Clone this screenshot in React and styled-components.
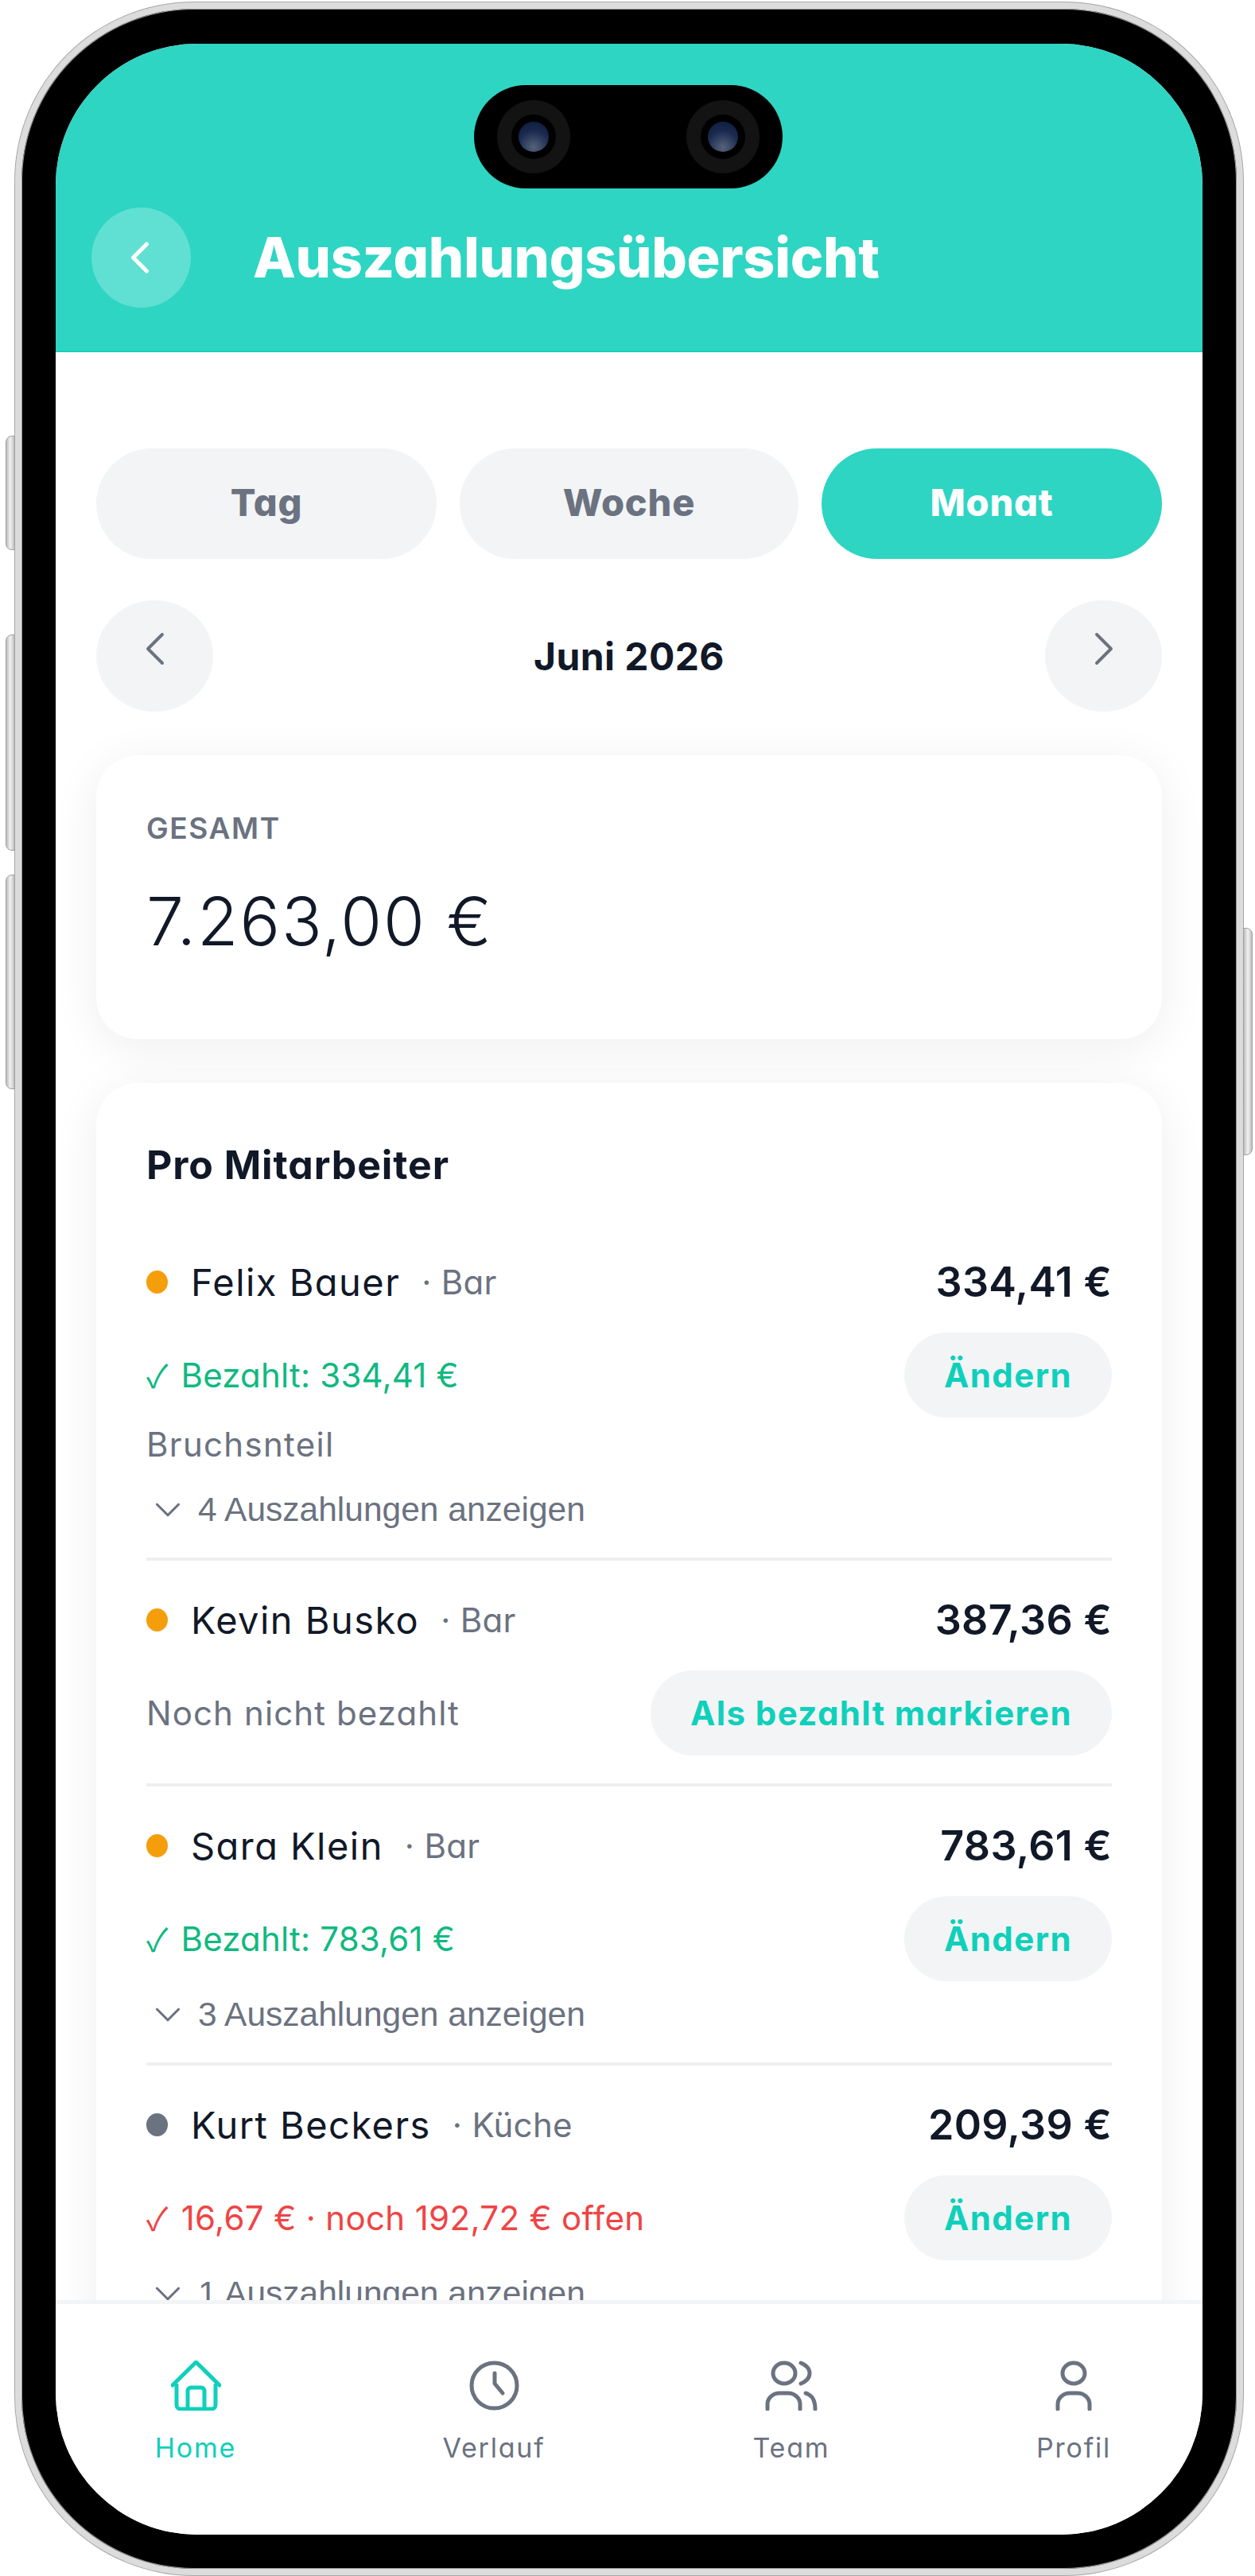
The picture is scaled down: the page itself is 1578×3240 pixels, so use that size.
import React from "react";
import styled, { createGlobalStyle } from "styled-components";
import { ChevronLeft, ChevronRight, ChevronDown } from "lucide-react";

const GlobalStyle = createGlobalStyle`
  html, body {
    margin: 0;
    padding: 0;
    background: #fff;
  }
  body {
    font-family: Inter, "Noto Sans", "Liberation Sans", sans-serif;
    font-feature-settings: "cv11";
  }
  * {
    box-sizing: border-box;
  }
`;

const Page = styled.div`
  width: 1578px;
  height: 3240px;
  padding: 3px 0 0 19px;
  overflow: hidden;
`;

const Frame = styled.div`
  position: relative;
  width: 1544px;
  height: 3236px;
  padding: 44px 43px 43px;
  background: #000;
  border: 8px solid #dcdcdc;
  border-radius: 225px;
  box-shadow: 0 0 0 1px #a8a8a8, inset 0 0 0 1px #9a9a9a;
`;

const SideKey = styled.div`
  position: absolute;
  top: ${(p) => p.$top}px;
  ${(p) => (p.$right ? "right: -20px;" : "left: -20px;")}
  width: 12px;
  height: ${(p) => p.$height}px;
  background: linear-gradient(90deg, #bdbdbd, #f2f2f2 50%, #bdbdbd);
  border: 1px solid #9f9f9f;
  border-radius: ${(p) => (p.$right ? "0 8px 8px 0" : "8px 0 0 8px")};
`;

const Screen = styled.div`
  position: relative;
  display: flex;
  flex-direction: column;
  height: 100%;
  background: #fff;
  border-radius: 178px;
  overflow: hidden;
`;

const Notch = styled.div`
  position: absolute;
  top: 52px;
  left: 526px;
  display: flex;
  align-items: center;
  justify-content: space-between;
  width: 388px;
  height: 130px;
  padding: 0 29px;
  background: #000;
  border-radius: 65px;
`;

const Camera = styled.div`
  display: flex;
  align-items: center;
  justify-content: center;
  width: 92px;
  height: 92px;
  background: #131313;
  border-radius: 50%;
`;

const CameraCore = styled.div`
  display: flex;
  align-items: center;
  justify-content: center;
  width: 56px;
  height: 56px;
  background: #000;
  border-radius: 50%;
`;

const Lens = styled.div`
  width: 38px;
  height: 38px;
  background: radial-gradient(circle at 50% 85%, #57627a, #1a2a50 55%, #0d1a3a);
  border-radius: 50%;
`;

const Header = styled.header`
  display: flex;
  flex-shrink: 0;
  align-items: center;
  gap: 78px;
  height: 388px;
  padding: 152px 0 0 45px;
  background: #2ed5c2;
  border-bottom: 2px solid #18d0bb;
`;

const BackButton = styled.div`
  display: flex;
  align-items: center;
  justify-content: center;
  width: 125px;
  height: 126px;
  padding-right: 4px;
  color: #fff;
  background: #60e0d2;
  border-radius: 50%;
`;

const Title = styled.h1`
  margin: 0;
  color: #fff;
  font-size: 70px;
  font-weight: 800;
  line-height: 80px;
  letter-spacing: -0.3px;
  white-space: nowrap;
`;

const Main = styled.main`
  flex: 1;
  min-height: 0;
  padding: 121px 51px 0;
  overflow: hidden;
`;

const Tabs = styled.div`
  display: grid;
  grid-template-columns: 428px 426px 428px;
  column-gap: 29px;
`;

const Tab = styled.div`
  display: flex;
  align-items: center;
  justify-content: center;
  height: 139px;
  padding-bottom: 4px;
  color: ${(p) => (p.$active ? "#fff" : "#6b7280")};
  background: ${(p) => (p.$active ? "#2ed5c2" : "#f3f4f6")};
  border-radius: 70px;
  font-size: 47px;
  font-weight: 800;
  letter-spacing: 0.8px;
`;

const DateRow = styled.div`
  display: flex;
  align-items: center;
  justify-content: space-between;
  margin-top: 52px;
`;

const DateButton = styled.div`
  display: flex;
  align-items: center;
  justify-content: center;
  width: 147px;
  height: 140px;
  padding-bottom: 18px;
  color: #6b7280;
  background: #f3f4f6;
  border-radius: 50%;
`;

const DateLabel = styled.div`
  color: #111827;
  font-size: 48px;
  font-weight: 700;
  letter-spacing: 0.4px;
`;

const Card = styled.section`
  margin-top: 55px;
  padding: ${(p) => p.$padding};
  height: ${(p) => p.$height || "auto"};
  background: #fff;
  border-radius: 52px;
  box-shadow: 0 10px 60px rgba(0, 0, 0, 0.07);
`;

const TotalLabel = styled.div`
  color: #6b7280;
  font-size: 37px;
  font-weight: 600;
  line-height: 44px;
  letter-spacing: 1.6px;
`;

const TotalValue = styled.div`
  margin-top: 45px;
  color: #111827;
  font-size: 84px;
  font-weight: 350;
  line-height: 100px;
  letter-spacing: 1.9px;
`;

const CardTitle = styled.h2`
  margin: 0;
  color: #111827;
  font-size: 50px;
  font-weight: 700;
  line-height: 60px;
  letter-spacing: 0.9px;
`;

const List = styled.div`
  margin-top: 43px;
`;

const Row = styled.div`
  padding: 44px 0 35px;
  border-bottom: ${(p) => (p.$last ? "none" : "4px solid #eeeff1")};
`;

const RowHead = styled.div`
  display: flex;
  align-items: center;
  height: 60px;
`;

const Dot = styled.span`
  flex-shrink: 0;
  width: 27px;
  height: 29px;
  background: ${(p) => p.$color};
  border-radius: 50%;
`;

const Name = styled.span`
  margin-left: 29px;
  color: #111827;
  font-size: 47px;
  font-weight: 400;
  letter-spacing: 1.45px;
`;

const Dept = styled.span`
  margin-left: 27px;
  color: #6b7280;
  font-size: 42px;
  font-weight: 400;
  letter-spacing: 0.3px;
`;

const Amount = styled.span`
  margin-left: auto;
  color: #111827;
  font-size: 52px;
  font-weight: 600;
  letter-spacing: 0.3px;
`;

const PayRow = styled.div`
  display: flex;
  align-items: center;
  justify-content: space-between;
  margin-top: 34px;
`;

const PayText = styled.span`
  color: ${(p) => p.$color};
  font-size: 42px;
  font-weight: 400;
  line-height: 50px;
  letter-spacing: ${(p) => p.$spacing}px;
`;

const CheckMark = styled.span`
  margin-right: 16px;
  font-family: "Noto Sans CJK JP", "DejaVu Sans", sans-serif;
  font-size: 40px;
  line-height: 1;
`;

const ActionButton = styled.div`
  display: flex;
  align-items: center;
  justify-content: center;
  height: 107px;
  padding: 0 50px;
  color: #0fd0bb;
  background: #f3f4f6;
  border-radius: 54px;
  font-size: 42px;
  font-weight: 700;
  letter-spacing: 1.4px;
`;

const Note = styled.div`
  margin-top: 9px;
  color: #6b7280;
  font-size: 42px;
  line-height: 50px;
  letter-spacing: 1.3px;
`;

const Toggle = styled.div`
  display: flex;
  align-items: center;
  gap: 11px;
  height: 50px;
  margin-top: ${(p) => p.$top}px;
  color: #6b7280;
  font-family: "Liberation Sans", Arial, sans-serif;
  font-size: 42.5px;
  line-height: 50px;
  font-feature-settings: normal;
`;

const BottomNav = styled.nav`
  display: grid;
  flex-shrink: 0;
  grid-template-columns: 375px 374px 355px 140px;
  height: 295px;
  padding: 71px 0 0 106px;
  background: #fff;
  border-top: 5px solid #f3f4f6;
`;

const NavItem = styled.div`
  display: flex;
  flex-direction: column;
  align-items: center;
  width: 140px;
  color: ${(p) => (p.$active ? "#0fd0bb" : "#6b7280")};
`;

const NavIcon = styled.svg`
  display: block;
  height: 63px;
  fill: none;
  stroke: currentColor;
  stroke-width: 5;
  stroke-linecap: round;
  stroke-linejoin: round;
`;

const NavLabel = styled.span`
  margin-top: 27px;
  font-size: 34px;
  line-height: 40px;
  letter-spacing: 1.8px;
`;

const rows = [
  {
    name: "Felix Bauer",
    dept: "Bar",
    dot: "#f59e0b",
    amount: "334,41 €",
    checked: true,
    pay: "Bezahlt: 334,41 €",
    payColor: "#10b981",
    paySpacing: 0.2,
    action: "Ändern",
    note: "Bruchsnteil",
    toggle: "4 Auszahlungen anzeigen",
    toggleTop: 32,
  },
  {
    name: "Kevin Busko",
    dept: "Bar",
    dot: "#f59e0b",
    amount: "387,36 €",
    pay: "Noch nicht bezahlt",
    payColor: "#6b7280",
    paySpacing: 1.1,
    action: "Als bezahlt markieren",
  },
  {
    name: "Sara Klein",
    dept: "Bar",
    dot: "#f59e0b",
    amount: "783,61 €",
    checked: true,
    pay: "Bezahlt: 783,61 €",
    payColor: "#10b981",
    paySpacing: 0.2,
    action: "Ändern",
    toggle: "3 Auszahlungen anzeigen",
    toggleTop: 17,
  },
  {
    name: "Kurt Beckers",
    dept: "Küche",
    dot: "#6b7280",
    amount: "209,39 €",
    checked: true,
    pay: "16,67 € · noch 192,72 € offen",
    payColor: "#ef4444",
    paySpacing: 0.35,
    action: "Ändern",
    toggle: "1 Auszahlungen anzeigen",
    toggleTop: 17,
  },
];

function HomeIcon() {
  return (
    <NavIcon viewBox="0 0 63 63" width="63">
      <path d="M2 31 31.5 2 61 31" />
      <path d="M7 31v25a5 5 0 0 0 5 5h39a5 5 0 0 0 5-5V31" />
      <path d="M21 60V38a4 4 0 0 1 4-4h13a4 4 0 0 1 4 4v22" />
    </NavIcon>
  );
}

function ClockIcon() {
  return (
    <NavIcon viewBox="0 0 63 63" width="63">
      <ellipse cx="31.5" cy="31.5" rx="28.5" ry="28.5" />
      <path d="M32 16v13l10 12" />
    </NavIcon>
  );
}

function TeamIcon() {
  return (
    <NavIcon viewBox="0 0 66 63" width="66">
      <ellipse cx="24" cy="16" rx="14" ry="13" />
      <path d="M45 3c7 3 11 8 11 13s-4 10-11 13" />
      <path d="M3 61v-6a15 14 0 0 1 15-14h11a15 14 0 0 1 15 14v6" />
      <path d="M51 41c7 2 12 8 12 20" />
    </NavIcon>
  );
}

function ProfileIcon() {
  return (
    <NavIcon viewBox="0 0 46 63" width="46">
      <ellipse cx="23" cy="16" rx="14" ry="13" />
      <path d="M3 61v-6a15 14 0 0 1 15-14h10a15 14 0 0 1 15 14v6" />
    </NavIcon>
  );
}

const navItems = [
  { label: "Home", icon: <HomeIcon />, active: true },
  { label: "Verlauf", icon: <ClockIcon /> },
  { label: "Team", icon: <TeamIcon /> },
  { label: "Profil", icon: <ProfileIcon /> },
];

export default function App() {
  return (
    <Page>
      <GlobalStyle />
      <Frame>
        <SideKey $top={537} $height={144} />
        <SideKey $top={787} $height={272} />
        <SideKey $top={1089} $height={270} />
        <SideKey $right $top={1156} $height={286} />
        <Screen>
          <Notch>
            <Camera>
              <CameraCore>
                <Lens />
              </CameraCore>
            </Camera>
            <Camera>
              <CameraCore>
                <Lens />
              </CameraCore>
            </Camera>
          </Notch>
          <Header>
            <BackButton>
              <ChevronLeft size={68} strokeWidth={1.8} />
            </BackButton>
            <Title>Auszahlungsübersicht</Title>
          </Header>
          <Main>
            <Tabs>
              <Tab>Tag</Tab>
              <Tab>Woche</Tab>
              <Tab $active>Monat</Tab>
            </Tabs>
            <DateRow>
              <DateButton>
                <ChevronLeft size={72} strokeWidth={1.3} />
              </DateButton>
              <DateLabel>Juni 2026</DateLabel>
              <DateButton>
                <ChevronRight size={72} strokeWidth={1.3} />
              </DateButton>
            </DateRow>
            <Card $padding="70px 63px 0" $height="357px">
              <TotalLabel>GESAMT</TotalLabel>
              <TotalValue>7.263,00 €</TotalValue>
            </Card>
            <Card $padding="73px 63px 200px">
              <CardTitle>Pro Mitarbeiter</CardTitle>
              <List>
                {rows.map((row, i) => (
                  <Row key={row.name} $last={i === rows.length - 1}>
                    <RowHead>
                      <Dot $color={row.dot} />
                      <Name>{row.name}</Name>
                      <Dept>· {row.dept}</Dept>
                      <Amount>{row.amount}</Amount>
                    </RowHead>
                    <PayRow>
                      <PayText $color={row.payColor} $spacing={row.paySpacing}>
                        {row.checked ? <CheckMark>✓</CheckMark> : null}
                        {row.pay}
                      </PayText>
                      <ActionButton>{row.action}</ActionButton>
                    </PayRow>
                    {row.note ? <Note>{row.note}</Note> : null}
                    {row.toggle ? (
                      <Toggle $top={row.toggleTop}>
                        <ChevronDown size={54} strokeWidth={1.4} />
                        {row.toggle}
                      </Toggle>
                    ) : null}
                  </Row>
                ))}
              </List>
            </Card>
          </Main>
          <BottomNav>
            {navItems.map((item) => (
              <NavItem key={item.label} $active={item.active}>
                {item.icon}
                <NavLabel>{item.label}</NavLabel>
              </NavItem>
            ))}
          </BottomNav>
        </Screen>
      </Frame>
    </Page>
  );
}
